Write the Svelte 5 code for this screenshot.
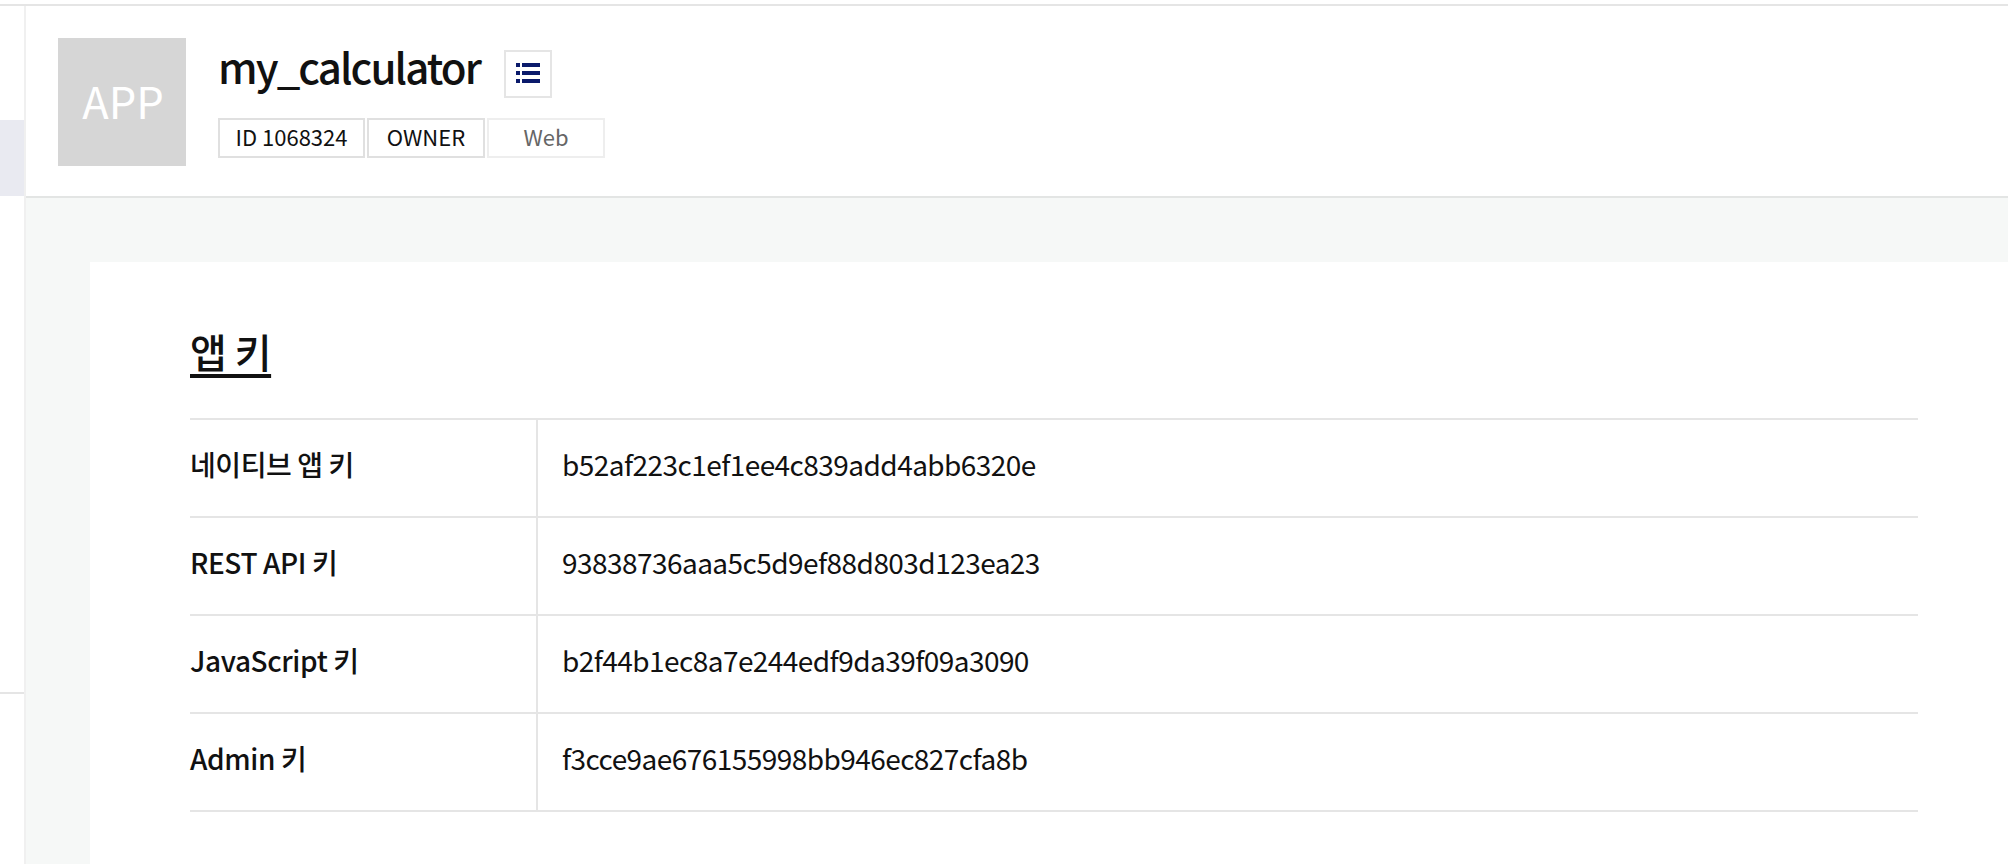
<script>
  const rows = [
    { label: '네이티브 앱 키', value: 'b52af223c1ef1ee4c839add4abb6320e' },
    { label: 'REST API 키', value: '93838736aaa5c5d9ef88d803d123ea23' },
    { label: 'JavaScript 키', value: 'b2f44b1ec8a7e244edf9da39f09a3090' },
    { label: 'Admin 키', value: 'f3cce9ae676155998bb946ec827cfa8b' }
  ];
</script>

<div class="page">
  <div class="topgap"></div>
  <div class="body">
    <aside class="side">
      <div class="active"></div>
      <div class="sideline"></div>
    </aside>
    <main class="main">
      <header class="head">
        <div class="logo">APP</div>
        <div class="info">
          <div class="titlerow">
            <h1>my_calculator</h1>
            <button class="listbtn" aria-label="목록">
              <svg width="24" height="20" viewBox="0 0 24 20" fill="#0a1a6b">
                <rect x="0" y="0" width="4" height="4" /><rect x="6" y="0" width="18" height="4" />
                <rect x="0" y="8" width="4" height="4" /><rect x="6" y="8" width="18" height="4" />
                <rect x="0" y="16" width="4" height="4" /><rect x="6" y="16" width="18" height="4" />
              </svg>
            </button>
          </div>
          <div class="tags">
            <span class="tag id">ID 1068324</span>
            <span class="tag owner">OWNER</span>
            <span class="tag web">Web</span>
          </div>
        </div>
      </header>
      <div class="content">
        <section class="card">
          <h2>앱 키</h2>
          <div class="table">
            {#each rows as row}
              <div class="row">
                <div class="label">{row.label}</div>
                <div class="value">{row.value}</div>
              </div>
            {/each}
          </div>
        </section>
      </div>
    </main>
  </div>
</div>

<style>
  :global(body) {
    margin: 0;
    background: #fff;
  }
  .page {
    height: 864px;
    overflow: hidden;
    font-family: "Noto Sans CJK KR", "Noto Sans", sans-serif;
    color: #111;
  }
  .topgap {
    height: 4px;
    border-bottom: 2px solid #e5e5e5;
  }
  .body {
    display: flex;
    height: 858px;
  }
  .side {
    width: 24px;
    flex: none;
    padding-top: 114px;
    border-right: 2px solid #f0f0f0;
  }
  .active {
    height: 76px;
    background: #e9eaf1;
  }
  .sideline {
    height: 2px;
    margin-top: 496px;
    background: #e5e5e5;
  }
  .main {
    flex: 1;
    min-width: 0;
    display: flex;
    flex-direction: column;
  }
  .head {
    height: 190px;
    border-bottom: 2px solid #e3e5e4;
    display: flex;
    padding-left: 32px;
  }
  .logo {
    width: 126px;
    height: 128px;
    padding-left: 2px;
    margin-top: 32px;
    background: #d6d6d6;
    color: #fff;
    font-size: 43.5px;
    line-height: 126px;
    text-align: center;
    flex: none;
  }
  .info {
    margin-left: 32px;
  }
  .titlerow {
    display: flex;
    align-items: flex-start;
    height: 48px;
    margin-top: 44px;
  }
  h1 {
    margin: -8px 0 0;
    width: 260px;
    font-size: 42px;
    font-weight: 500;
    line-height: 48px;
    letter-spacing: -1.9px;
    white-space: nowrap;
  }
  .listbtn {
    width: 48px;
    height: 48px;
    margin-left: 26px;
    padding: 0 0 2px;
    background: #fff;
    border: 2px solid #e5e5e5;
    display: flex;
    align-items: center;
    justify-content: center;
  }
  .tags {
    display: flex;
    gap: 2px;
    margin-top: 20px;
  }
  .tag {
    height: 40px;
    box-sizing: border-box;
    border: 2px solid #e0e0e0;
    font-size: 22px;
    line-height: 33px;
    text-align: center;
  }
  .id { width: 147px; }
  .owner { width: 118px; }
  .web { width: 118px; color: #666; border-color: #eee; }
  .content {
    flex: 1;
    background: #f6f8f7;
    padding: 64px 0 0 64px;
  }
  .card {
    background: #fff;
    height: 100%;
    padding: 0 90px 0 100px;
  }
  h2 {
    margin: 0;
    padding-top: 61px;
    height: 95px;
    font-size: 40px;
    font-weight: 500;
    line-height: 56px;
    letter-spacing: -0.5px;
    text-decoration: underline;
    text-decoration-thickness: 4px;
    text-underline-offset: 6px;
  }
  .table {
    border-top: 2px solid #e5e5e5;
  }
  .row {
    display: flex;
    height: 96px;
    border-bottom: 2px solid #e5e5e5;
    font-size: 28px;
  }
  .label {
    width: 346px;
    font-weight: 500;
    line-height: 89px;
    letter-spacing: -0.4px;
    border-right: 2px solid #e5e5e5;
    flex: none;
  }
  .value {
    padding-left: 24px;
    line-height: 89px;
    letter-spacing: -0.55px;
  }
</style>
